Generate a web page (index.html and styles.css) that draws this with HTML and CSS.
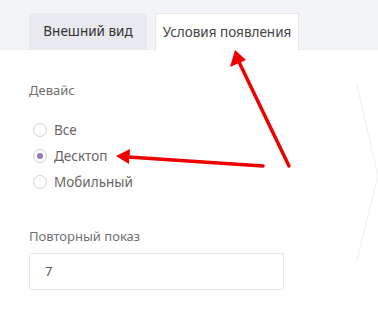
FILE: index.html
```html
<!DOCTYPE html>
<html lang="ru">
<head>
	<meta charset="UTF-8">
	<title>Условия появления</title>
	<link rel="stylesheet" href="styles.css">
</head>
<body>
	<div class="tabs">
		<div class="tab">Внешний вид</div>
		<div class="tab active">Условия появления</div>
	</div>
	<div class="panel">
		<div class="label">Девайс</div>
		<ul class="radios">
			<li><span class="radio"></span>Все</li>
			<li><span class="radio checked"></span>Десктоп</li>
			<li><span class="radio"></span>Мобильный</li>
		</ul>
		<div class="label">Повторный показ</div>
		<div class="input">7</div>
	</div>
	<svg class="overlay" width="378" height="330" viewBox="0 0 378 330">
		<polyline points="357,85 378,176 357,260" fill="none" stroke="#f3f2fb" stroke-width="1.5"/>
		<g stroke="#ee0000" stroke-width="3.5" stroke-linecap="round">
			<line x1="289" y1="166" x2="239" y2="62"/>
			<line x1="263" y1="166" x2="128" y2="157"/>
		</g>
		<g fill="#ee0000">
			<polygon points="235,50 230,67 246,60"/>
			<polygon points="116,156 130,149 129,164"/>
		</g>
	</svg>
</body>
</html>
```
FILE: styles.css
```css
body{margin:0;font-family:"Noto Sans","Open Sans",sans-serif;font-size:13px;color:#6b6b6b;background:#fff;}
ul{list-style:none;padding:0;margin:0;}
.tabs{display:flex;gap:8px;padding:13px 0 0 29px;height:36px;background:#f3f4f8;border-bottom:1px solid #eceef2;}
.tab{width:118px;height:36px;line-height:36px;text-align:center;background:#e8eaef;color:#333;font-size:13.5px;}
.tab.active{width:142px;height:37px;background:#fff;border:1px solid #e6e8ec;border-bottom:none;color:#444;}
.panel{padding:30px 29px 0;}
.label{line-height:20px;color:#707070;}
.radios{padding:17px 0 31px 4px;}
.radios li{display:flex;align-items:center;height:26px;color:#666;font-size:13.5px;}
.radio{width:14px;height:14px;border:1px solid #d2d2d2;border-radius:50%;margin-right:7px;box-sizing:border-box;position:relative;}
.radio.checked::after{content:"";position:absolute;left:3px;top:3px;width:6px;height:6px;border-radius:50%;background:#9a79b8;}
.input{box-sizing:border-box;width:255px;height:37px;margin-top:7px;border:1px solid #e8e8e8;border-radius:2px;padding-left:15px;line-height:35px;color:#555;}
.overlay{position:absolute;left:0;top:0;pointer-events:none;}
```
